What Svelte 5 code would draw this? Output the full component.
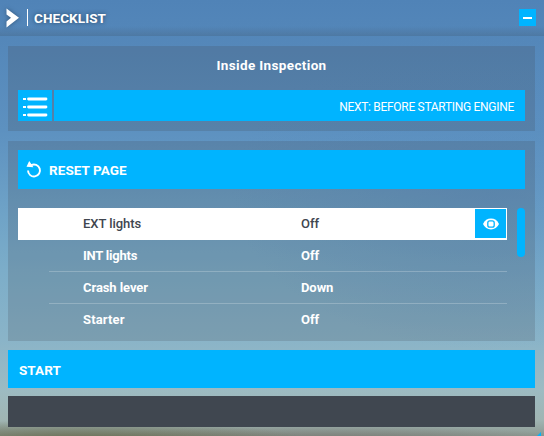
<script>
  const rows = [
    { item: 'EXT lights', value: 'Off', active: true, ls: -0.05 },
    { item: 'INT lights', value: 'Off', ls: -0.22 },
    { item: 'Crash lever', value: 'Down', ls: -0.08 },
    { item: 'Starter', value: 'Off', ls: 0.15 }
  ];
</script>

<div class="window">
  <header>
    <svg class="chevron" width="14" height="20" viewBox="0 0 14 20"><path d="M0.5 0.5 L13 9.7 L0.5 19.5 V13.5 L5 9.7 L0.5 6.5 Z" fill="#fff" /></svg>
    <i class="rule"></i>
    <h1>CHECKLIST</h1>
    <button class="minimize" aria-label="Minimize"><i></i></button>
  </header>

  <section class="top">
    <h2>Inside Inspection</h2>
    <div class="nav">
      <button class="list" aria-label="Pages">
        <svg width="34" height="31" viewBox="0 0 34 31" fill="none" stroke="#fff" stroke-width="2.8">
          <path d="M10.5 9H28M10.5 17H28M10.5 25H28" stroke-linecap="round" />
          <path d="M5 9H8M5 17H8M5 25H8" stroke-width="2" />
        </svg>
      </button>
      <button class="next"><span>NEXT: BEFORE STARTING ENGINE</span></button>
    </div>
  </section>

  <section class="page">
    <button class="reset">
      <svg width="16" height="18" viewBox="0 0 16 18">
        <path d="M5.2 4.2 A6 6 0 1 1 2 9.6" fill="none" stroke="#fff" stroke-width="1.9" />
        <path d="M3.2 0 L7.4 6.3 L0.5 5.8 Z" fill="#fff" />
      </svg>
      <span>RESET PAGE</span>
    </button>
    <div class="body">
      <div class="rows">
        {#each rows as row}
          <div class="row" class:active={row.active}>
            <span class="item" style="letter-spacing:{row.ls}px">{row.item}</span>
            <span class="value">{row.value}</span>
            {#if row.active}
              <button class="eye" aria-label="Show">
                <svg width="18" height="12" viewBox="0 0 18 12">
                  <path d="M1 6 Q3.6 0.6 9 0.6 Q14.4 0.6 17 6 Q14.4 11.4 9 11.4 Q3.6 11.4 1 6Z" fill="#fff" />
                  <rect x="5.8" y="2.8" width="6.4" height="6.4" rx="2" fill="#fff" stroke="#00b4ff" stroke-width="1.3" />
                </svg>
              </button>
            {/if}
          </div>
        {/each}
      </div>
      <div class="thumb"></div>
    </div>
  </section>

  <button class="start">START</button>
  <div class="footer"></div>
  <svg class="grip" width="4" height="4" viewBox="0 0 4 4"><path d="M4 0V4H0Z" fill="#00b4ff" /></svg>
</div>

<style>
  :global(body) { margin: 0; }
  * { box-sizing: border-box; }
  .window {
    position: relative;
    width: 544px;
    height: 436px;
    overflow: hidden;
    display: flex;
    flex-direction: column;
    color: #fff;
    font-family: Roboto, "Liberation Sans", sans-serif;
    background:
      radial-gradient(ellipse 230px 22px at 80px 442px, rgba(96, 98, 65, .85), transparent),
      radial-gradient(ellipse 260px 18px at 330px 443px, rgba(112, 108, 102, .8), transparent),
      radial-gradient(ellipse 260px 160px at 490px 190px, rgba(85, 137, 190, .4), transparent),
      linear-gradient(#5083b7 0, #5588ba 50px, #5d91c0 130px, #6fa3c7 215px, #7cadc9 270px, #8ab4c8 340px, #9dbbc2 390px, #a0b5b3 420px, #8c9992 436px);
  }
  button { border: 0; padding: 0; margin: 0; color: inherit; font: inherit; background: #00b4ff; display: flex; align-items: center; }
  svg { display: block; }
  h1, h2 { margin: 0; font-weight: 700; white-space: nowrap; }
  header {
    flex: none;
    height: 36px;
    display: flex;
    align-items: center;
    padding: 0 8px 1px 6px;
    background: linear-gradient(transparent 26px, rgba(64, 88, 112, .3));
  }
  .chevron { filter: drop-shadow(0 0 2px rgba(30, 55, 80, .6)); }
  .rule { width: 1px; height: 17px; background: #fff; margin: 0 6px 0 7px; }
  h1 { font-size: 13.5px; line-height: 17px; letter-spacing: .08px; padding-top: 1px; text-shadow: 0 0 4px rgba(25, 50, 75, .8); }
  .minimize { margin-left: auto; width: 17px; height: 17px; justify-content: center; }
  .minimize i { width: 9px; height: 2px; background: #fff; }
  section { margin: 0 9px 0 8px; background: rgba(64, 72, 82, .2); }
  .top { flex: none; height: 85px; margin-top: 10px; padding: 11px 10px 10px; display: flex; flex-direction: column; justify-content: space-between; }
  h2 { font-size: 13.5px; line-height: 17px; text-align: center; letter-spacing: .36px; }
  .nav { height: 31px; display: flex; gap: 2px; }
  .list { width: 34px; height: 31px; }
  .next { flex: 1; justify-content: flex-end; padding: 2px 11px 0 0; font-size: 12px; letter-spacing: -.3px; }
  .page { flex: none; height: 200px; margin-top: 10px; padding: 9px 10px 0; display: flex; flex-direction: column; }
  .reset { height: 39px; flex: none; padding: 0 8px; gap: 7px; font-size: 13.5px; font-weight: 700; }
  .reset span { padding-top: 1px; letter-spacing: .07px; }
  .body { margin-top: 19px; display: flex; gap: 10px; }
  .rows { width: 489px; }
  .row { height: 32px; padding-left: 65px; display: flex; align-items: center; font-size: 13px; font-weight: 700; background: linear-gradient(rgba(255, 255, 255, .22), rgba(255, 255, 255, .22)) 31px 31px / 458px 1px no-repeat; }
  .row:last-child { background: none; }
  .row.active { background: #fff; color: #40464f; font-weight: 500; }
  .item, .value { padding-bottom: 2px; }
  .item { width: 218px; }
  .value { letter-spacing: -.08px; }
  .eye { width: 31px; height: 29px; margin: 0 1px 1px auto; justify-content: center; }
  .thumb { width: 8px; height: 49px; border-radius: 4px; background: #00b4ff; }
  .start { flex: none; height: 38px; margin: 9px 9px 0 8px; padding: 2px 11px 0; font-size: 13.5px; font-weight: 700; letter-spacing: .05px; }
  .footer { flex: none; height: 31px; margin: 8px 9px 0 8px; background: #404750; }
  .grip { position: absolute; right: 3px; bottom: 0; }
</style>
